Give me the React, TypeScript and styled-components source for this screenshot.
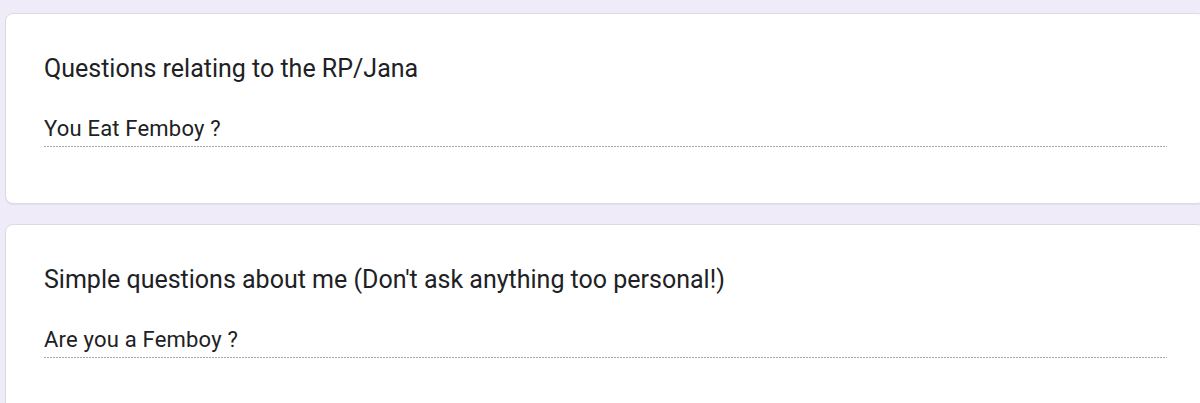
import React from "react";
import styled, { createGlobalStyle } from "styled-components";

const GlobalStyle = createGlobalStyle`
  html, body {
    margin: 0;
    padding: 0;
    background: #f0ebf8;
    overflow: hidden;
  }
  body {
    font-family: Roboto, "Liberation Sans", Arial, sans-serif;
    color: #202124;
  }
`;

const Page = styled.div`
  display: flex;
  flex-direction: column;
  gap: 20px;
  padding: 13px 0 0 5px;
  width: 1200px;
`;

const Card = styled.section`
  box-sizing: border-box;
  width: 1200px;
  height: 191px;
  background: #fff;
  border: 1px solid #dadce0;
  border-radius: 8px;
  box-shadow: 0 1px 1px rgba(0, 0, 0, 0.06);
  padding: 39px 0 0 38px;
  flex-shrink: 0;
`;

const SectionTitle = styled.h2`
  margin: 0;
  font-size: 25px;
  line-height: 32px;
  font-weight: 400;
  color: #202124;
`;

// answer line: short grey dashes like the printed form view
const QuestionLabel = styled.div`
  margin-top: 30px;
  width: 1123px;
  font-size: 22px;
  line-height: 28px;
  letter-spacing: 0.2px;
  color: #202124;
  padding-bottom: 4px;
  background-image: repeating-linear-gradient(
    to right,
    #a8a8a8 0 2px,
    transparent 2px 3px
  );
  background-size: 100% 1px;
  background-position: left bottom;
  background-repeat: no-repeat;
`;

type Section = { title: string; question: string };

const sections: Section[] = [
  { title: "Questions relating to the RP/Jana", question: "You Eat Femboy ?" },
  {
    title: "Simple questions about me (Don't ask anything too personal!)",
    question: "Are you a Femboy ?",
  },
];

export default function App() {
  return (
    <>
      <GlobalStyle />
      <Page>
        {sections.map((s) => (
          <Card key={s.title}>
            <SectionTitle>{s.title}</SectionTitle>
            <QuestionLabel>{s.question}</QuestionLabel>
          </Card>
        ))}
      </Page>
    </>
  );
}
